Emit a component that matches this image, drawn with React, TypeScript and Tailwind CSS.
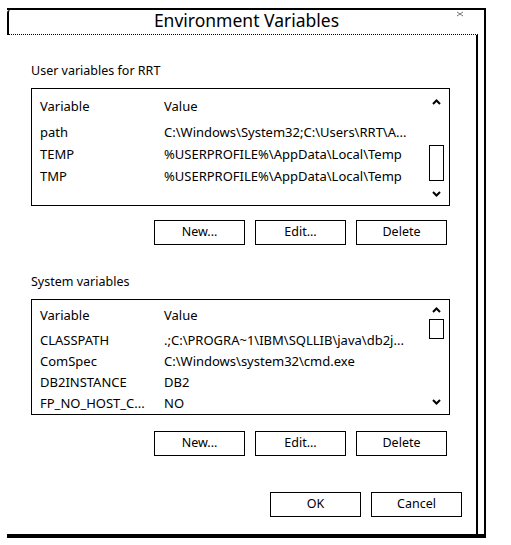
import React from "react";

type Row = { name: string; value: string };

const USER_ROWS: Row[] = [
  { name: "path", value: "C:\\Windows\\System32;C:\\Users\\RRT\\A..." },
  { name: "TEMP", value: "%USERPROFILE%\\AppData\\Local\\Temp" },
  { name: "TMP", value: "%USERPROFILE%\\AppData\\Local\\Temp" },
];

const SYSTEM_ROWS: Row[] = [
  { name: "CLASSPATH", value: ".;C:\\PROGRA~1\\IBM\\SQLLIB\\java\\db2j..." },
  { name: "ComSpec", value: "C:\\Windows\\system32\\cmd.exe" },
  { name: "DB2INSTANCE", value: "DB2" },
  { name: "FP_NO_HOST_C...", value: "NO" },
];

function Chevron({ up }: { up?: boolean }) {
  return (
    <svg width="9" height="6" viewBox="0 0 9 6" className="block">
      <path
        d={up ? "M1 5 L4.5 1.5 L8 5" : "M1 1 L4.5 4.5 L8 1"}
        fill="none"
        stroke="black"
        strokeWidth="2"
      />
    </svg>
  );
}

function Button({ label }: { label: string }) {
  return (
    <div className="flex h-[25px] w-[91px] items-center justify-center border border-black text-[12.5px] text-black">
      {label}
    </div>
  );
}

function VarList({
  rows,
  height,
  padTop,
  headerGap,
  rowH,
  upTop,
  thumbTop,
  thumbH,
  downBottom,
}: {
  rows: Row[];
  height: number;
  padTop: number;
  headerGap: number;
  rowH: number;
  upTop: number;
  thumbTop: number;
  thumbH: number;
  downBottom: number;
}) {
  return (
    <div className="flex w-[419px] border border-black" style={{ height }}>
      <div className="flex-1 pl-[8px] text-[13px] text-black" style={{ paddingTop: padTop }}>
        <div className="flex h-[22px] items-center">
          <span className="w-[124px]">Variable</span>
          <span>Value</span>
        </div>
        <div style={{ height: headerGap }} />
        {rows.map((r) => (
          <div key={r.name} className="flex items-center" style={{ height: rowH }}>
            <span className="w-[124px] whitespace-nowrap">{r.name}</span>
            <span className="whitespace-nowrap">{r.value}</span>
          </div>
        ))}
      </div>
      <div className="mr-[4px] flex w-[17px] flex-col items-center">
        <div style={{ height: upTop }} />
        <Chevron up />
        <div
          className="w-[15px] border border-black"
          style={{ marginTop: thumbTop, height: thumbH }}
        />
        <div className="flex-1" />
        <Chevron />
        <div style={{ height: downBottom }} />
      </div>
    </div>
  );
}

export default function App() {
  return (
    <div
      className="h-[545px] w-[511px] overflow-hidden bg-white pl-[7px] pt-[8px]"
      style={{ fontFamily: '"Noto Sans", "Open Sans", sans-serif' }}
    >
      <div className="flex h-[530px] w-[479px] flex-col border-b-[4px] border-r-2 border-t-2 border-black">
        {/* title bar */}
        <div className="relative h-[25px] rounded-tl-[3px] border-l-2 border-black">
          <div className="text-center text-[17.5px] leading-[20px] text-black">
            Environment Variables
          </div>
          <div className="absolute bottom-0 left-0 right-[6px] border-b border-dotted border-black" />
          <svg
            width="8"
            height="6"
            viewBox="0 0 8 6"
            className="absolute right-[20px] top-[1px]"
          >
            <path d="M1 1 L7 5 M7 1 L1 5" stroke="#777" strokeWidth="1" />
          </svg>
        </div>

        {/* body */}
        <div className="flex-1 pr-[6px]">
          <div className="h-full border-r-2 border-black pl-[24px]">
            <div className="pt-[28px] text-[12.5px] leading-[16px] text-black">
              User variables for RRT
            </div>
            <div className="mt-[9px]">
              <VarList
                rows={USER_ROWS}
                height={118}
                padTop={7}
                headerGap={4}
                rowH={22}
                upTop={10}
                thumbTop={40}
                thumbH={36}
                downBottom={8}
              />
            </div>
            <div className="mt-[14px] flex justify-end gap-[10px] pr-[29px]">
              <Button label="New..." />
              <Button label="Edit..." />
              <Button label="Delete" />
            </div>
            <div className="pt-[29px] text-[12.5px] leading-[16px] text-black">
              System variables
            </div>
            <div className="mt-[9px]">
              <VarList
                rows={SYSTEM_ROWS}
                height={116}
                padTop={5}
                headerGap={3}
                rowH={21}
                upTop={7}
                thumbTop={6}
                thumbH={20}
                downBottom={9}
              />
            </div>
            <div className="mt-[16px] flex justify-end gap-[10px] pr-[29px]">
              <Button label="New..." />
              <Button label="Edit..." />
              <Button label="Delete" />
            </div>
            <div className="mt-[36px] flex justify-end gap-[10px] pr-[14px]">
              <Button label="OK" />
              <Button label="Cancel" />
            </div>
          </div>
        </div>
      </div>
    </div>
  );
}
